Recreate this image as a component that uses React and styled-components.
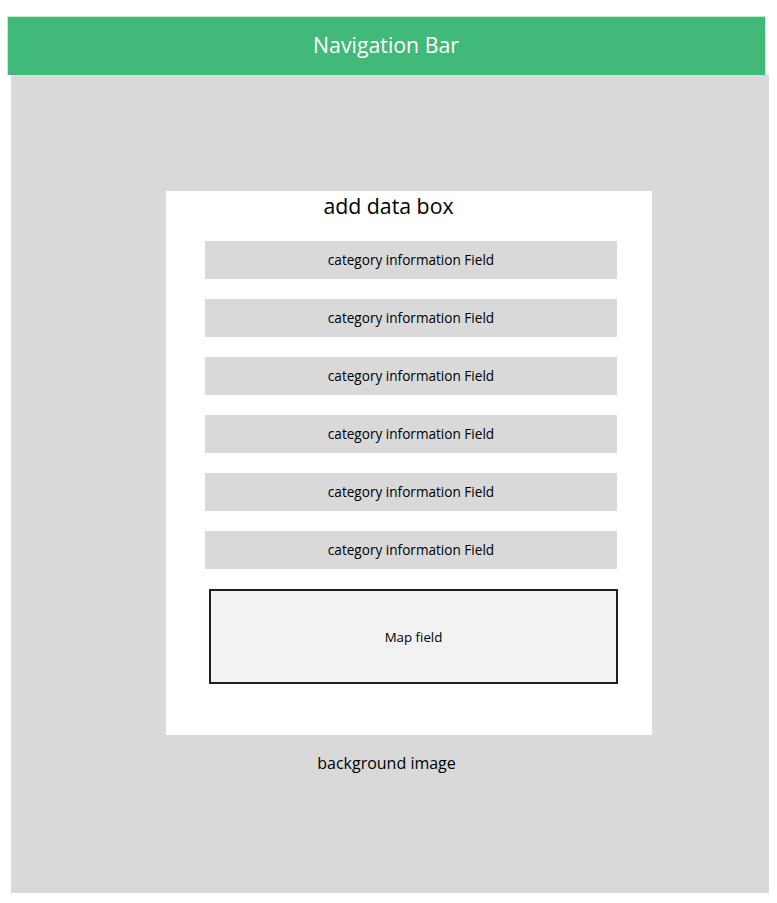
import styled, { createGlobalStyle } from "styled-components";

const GlobalStyle = createGlobalStyle`
  body { margin: 0; background: #ffffff; font-family: "Open Sans", "Noto Sans", sans-serif; }
`;

const Page = styled.div`padding-top: 16px; width: 777px; height: 903px; box-sizing: border-box;`;
const Navbar = styled.div`
  margin-left: 7px; width: 759px; height: 59px; box-sizing: border-box;
  background: #41b979; border: 1px solid #c6e9d5; border-bottom: none;
  display: flex; align-items: center; justify-content: center;
  color: #ffffff; font-size: 21.3px; padding: 0 1px 4px 0;
`;
const Background = styled.div`
  margin-left: 11px; width: 758px; height: 818px; background: #d9d9d9;
  display: flex; flex-direction: column; padding-top: 116px; box-sizing: border-box;
`;
const Box = styled.div`
  margin-left: 155px; width: 486px; height: 544px; background: #ffffff;
  display: flex; flex-direction: column; box-sizing: border-box; padding: 0 0 0 39px;
`;
const Title = styled.div`
  font-size: 21.3px; color: #000; text-align: center; height: 30px; line-height: 30px;
  padding-right: 80px; margin-bottom: 20px;
`;
const Fields = styled.div`display: flex; flex-direction: column; gap: 20px; width: 412px;`;
const Field = styled.div`
  height: 38px; background: #d9d9d9; display: flex; align-items: center; justify-content: center;
  font-size: 13.6px; color: #000; padding-bottom: 1px; box-sizing: border-box;
`;
const MapField = styled.div`
  margin: 20px 0 0 4px; width: 409px; height: 95px; box-sizing: border-box;
  background: #f2f2f2; border: 2px solid #1f1f1f;
  display: flex; align-items: center; justify-content: center; font-size: 13.3px; color: #000;
`;
const Caption = styled.div`
  margin-top: 17px; text-align: center; font-size: 16px; color: #000; padding-right: 7px;
`;

export default function App() {
  const fields = Array.from({ length: 6 }, (_, i) => i);
  return (
    <Page>
      <GlobalStyle />
      <Navbar>Navigation Bar</Navbar>
      <Background>
        <Box>
          <Title>add data box</Title>
          <Fields>
            {fields.map((i) => (
              <Field key={i}>category information Field</Field>
            ))}
          </Fields>
          <MapField>Map field</MapField>
        </Box>
        <Caption>background image</Caption>
      </Background>
    </Page>
  );
}
